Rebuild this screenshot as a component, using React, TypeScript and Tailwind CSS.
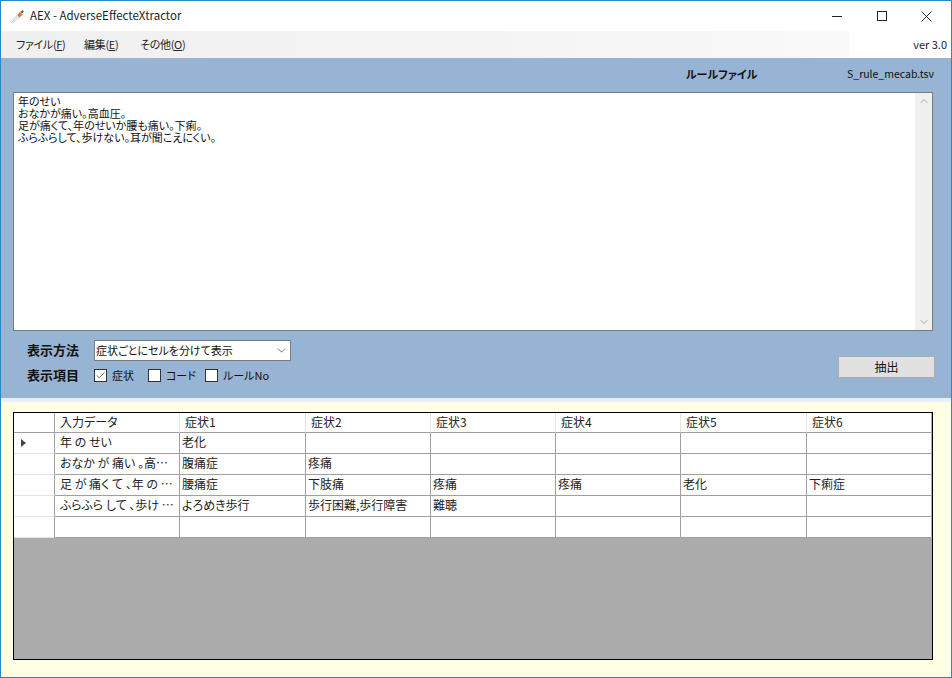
import { ChevronDown, ChevronUp, Check } from "lucide-react";

const font = { fontFamily: '"Noto Sans CJK JP", "Liberation Sans", sans-serif' };

const columns = ["入力データ", "症状1", "症状2", "症状3", "症状4", "症状5", "症状6"];
const rows = [
  ["年 の せい", "老化", "", "", "", "", ""],
  ["おなか が 痛い 。高…", "腹痛症", "疼痛", "", "", "", ""],
  ["足 が 痛く て 、年 の …", "腰痛症", "下肢痛", "疼痛", "疼痛", "老化", "下痢症"],
  ["ふらふら して 、歩け …", "よろめき歩行", "歩行困難,歩行障害", "難聴", "", "", ""],
  ["", "", "", "", "", "", ""],
];
const inputText = [
  "年のせい",
  "おなかが痛い。高血圧。",
  "足が痛くて、年のせいか腰も痛い。下痢。",
  "ふらふらして、歩けない。耳が聞こえにくい。",
];

function SyringeIcon() {
  return (
    <svg width="16" height="16" viewBox="0 0 16 16" className="shrink-0">
      <path d="M2 15 L5 12" stroke="#b8b8b8" strokeWidth="1" />
      <path d="M3.5 12 L8 7.5 L10 9.5 L5.5 14 Z" fill="#e6e6e6" stroke="#c4c4c4" strokeWidth="0.5" />
      <path d="M8 7 L11 4 L13.5 6.5 L10.5 9.5 Z" fill="#dd7a2c" />
      <path d="M11.5 4 L13.5 2 L15 3.5 L13 5.5 Z" fill="#6b5a4a" />
    </svg>
  );
}

function CheckItem({ label, checked, width }: { label: string; checked?: boolean; width: string }) {
  return (
    <label className={`flex items-center gap-[5px] ${width}`}>
      <span className="flex h-[13px] w-[13px] shrink-0 items-center justify-center border border-[#333] bg-white">
        {checked && <Check size={11} strokeWidth={1.5} className="text-[#333]" />}
      </span>
      <span className="text-[11px] leading-none text-[#111]">{label}</span>
    </label>
  );
}

export default function App() {
  return (
    <div
      style={font}
      className="flex h-[678px] w-[952px] flex-col overflow-hidden border border-[#2b87c8] border-b-[#3a7f92] bg-white text-black [font-feature-settings:'palt']"
    >
      {/* title bar */}
      <div className="flex h-[30px] shrink-0 items-center bg-white">
        <div className="ml-[8px] flex items-center gap-[5px]">
          <SyringeIcon />
          <span className="text-[11.5px] text-[#222]">AEX - AdverseEffecteXtractor</span>
        </div>
        <div className="ml-auto mr-[2px] flex items-center">
          <div className="flex w-[45px] justify-center">
            <svg width="10" height="10" viewBox="0 0 10 10"><path d="M0 5.5H10" stroke="#222" /></svg>
          </div>
          <div className="flex w-[45px] justify-center">
            <svg width="10" height="10" viewBox="0 0 10 10"><rect x="0.5" y="0.5" width="9" height="9" fill="none" stroke="#222" /></svg>
          </div>
          <div className="flex w-[45px] justify-center">
            <svg width="11" height="11" viewBox="0 0 11 11"><path d="M0.5 0.5L10.5 10.5M10.5 0.5L0.5 10.5" stroke="#222" /></svg>
          </div>
        </div>
      </div>

      {/* menu */}
      <div className="flex h-[27px] shrink-0 items-center bg-gradient-to-r from-[#f0f0f0] via-[#f4f4f4] to-[#fbfbfb]">
        <div className="ml-[15px] flex text-[11px] tracking-[-0.3px] text-[#222]">
          <span className="w-[68px]">ファイル(<span className="underline">F</span>)</span>
          <span className="w-[56px]">編集(<span className="underline">E</span>)</span>
          <span>その他(<span className="underline">O</span>)</span>
        </div>
        <div className="ml-auto flex h-full w-[102px] items-center justify-end bg-white pr-[4px] text-[11px] text-[#222]">
          ver 3.0
        </div>
      </div>

      {/* upper panel */}
      <div className="flex h-[340px] shrink-0 flex-col bg-[#98b4d4] px-[12px]">
        <div className="flex h-[34px] w-[920px] shrink-0 items-center justify-end text-[#111]">
          <span className="mt-[-2px] w-[161px] text-[11px] font-bold">ルールファイル</span>
          <span className="mt-[-2px] w-[86px] whitespace-nowrap text-[10.5px]">S_rule_mecab.tsv</span>
        </div>
        <div className="flex h-[239px] w-[920px] shrink-0 border border-[#7a7a7a] bg-white">
          <div className="flex-1 whitespace-pre-line pl-[4px] pt-[2px] text-[11px] leading-[12px] text-[#111]">
            {inputText.join("\n")}
          </div>
          <div className="flex w-[17px] flex-col items-center justify-between bg-[#f0f0f0] py-[2px] text-[#a6a6a6]">
            <ChevronUp size={12} strokeWidth={2} />
            <ChevronDown size={12} strokeWidth={2} />
          </div>
        </div>
        <div className="flex flex-1 items-start justify-between pl-[14px] pr-[4px]">
          <div className="grid grid-cols-[67px_auto] items-center gap-y-[5px] pt-[9px]">
            <span className="mt-[-2px] text-[13px] font-bold text-[#111]">表示方法</span>
            <div className="flex h-[21px] w-[197px] items-center justify-between border border-[#7a7a7a] bg-white pl-[1px] pr-[2px] text-[11px] text-[#111]">
              <span>症状ごとにセルを分けて表示</span>
              <ChevronDown size={13} strokeWidth={1.4} className="text-[#444]" />
            </div>
            <span className="mt-[-1px] text-[13px] font-bold text-[#111]">表示項目</span>
            <div className="flex items-center">
              <CheckItem label="症状" checked width="w-[54px]" />
              <CheckItem label="コード" width="w-[57px]" />
              <CheckItem label="ルールNo" width="w-[70px]" />
            </div>
          </div>
          <button className="mt-[25px] h-[22px] w-[97px] border border-[#adadad] bg-[#e1e1e1] text-[12px] text-[#111]">
            抽出
          </button>
        </div>
      </div>

      {/* lower panel */}
      <div className="h-[4px] shrink-0 bg-[#e9eff2]" />
      <div className="flex-1 bg-[#ffffe4] px-[12px] pt-[10px] pb-[17px]">
        <div className="flex h-[248px] w-[920px] flex-col border border-black bg-[#ababab]">
          <div className="grid w-[917px] grid-cols-[41px_125px_126px_125px_125px_125px_126px_124px] bg-white text-[12px] text-[#222]">
            <div className="h-[20px] border-r border-b border-r-[#a0a0a0] border-b-[#a0a0a0]" />
            {columns.map((c, i) => (
              <div
                key={c}
                className={`flex h-[20px] items-center border-b border-b-[#a0a0a0] pb-[2px] pl-[5px] ${i === columns.length - 1 ? "" : "border-r border-r-[#e4e4e4]"}`}
              >
                {c}
              </div>
            ))}
            {rows.map((row, r) => (
              <RowCells key={r} row={row} current={r === 0} />
            ))}
          </div>
        </div>
      </div>
    </div>
  );
}

function RowCells({ row, current }: { row: string[]; current: boolean }) {
  return (
    <>
      <div className="flex h-[21px] items-center border-r border-b border-r-[#a0a0a0] border-b-[#e4e4e4] pl-[7px]">
        {current && <span className="h-0 w-0 border-y-[4px] border-l-[5px] border-y-transparent border-l-[#444]" />}
      </div>
      {row.map((cell, i) => (
        <div
          key={i}
          className={`flex h-[21px] items-center whitespace-nowrap border-b border-b-[#a0a0a0] pb-[2px] ${i === 0 ? "pl-[5px]" : "pl-[2px]"} ${i === row.length - 1 ? "" : "border-r border-r-[#a0a0a0]"}`}
        >
          {cell}
        </div>
      ))}
    </>
  );
}
